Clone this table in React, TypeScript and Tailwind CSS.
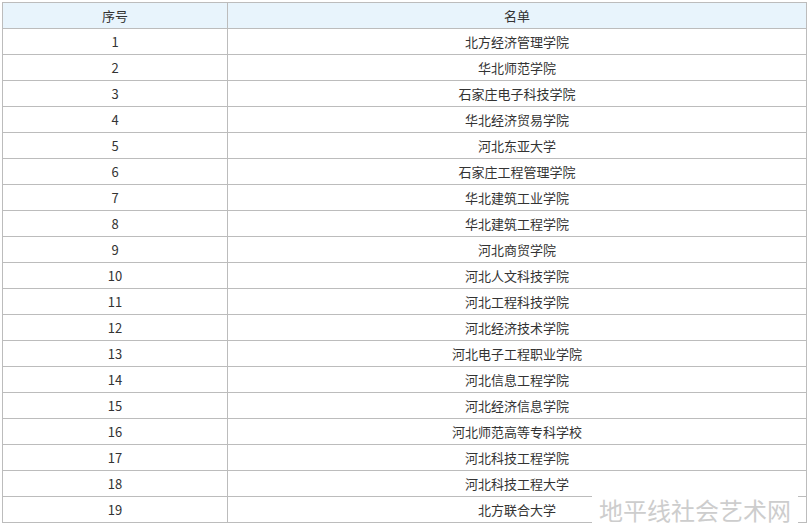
import React from "react";

const names = [
  "北方经济管理学院",
  "华北师范学院",
  "石家庄电子科技学院",
  "华北经济贸易学院",
  "河北东亚大学",
  "石家庄工程管理学院",
  "华北建筑工业学院",
  "华北建筑工程学院",
  "河北商贸学院",
  "河北人文科技学院",
  "河北工程科技学院",
  "河北经济技术学院",
  "河北电子工程职业学院",
  "河北信息工程学院",
  "河北经济信息学院",
  "河北师范高等专科学校",
  "河北科技工程学院",
  "河北科技工程大学",
  "北方联合大学",
];

export default function App() {
  return (
    <div
      className="relative w-[809px] h-[525px] bg-white overflow-hidden"
      style={{ fontFamily: '"Microsoft YaHei", "Noto Sans CJK SC", "Noto Sans", sans-serif' }}
    >
      <div className="ml-[2px] mt-[2px] w-[805px] border border-[#bcbcbc] text-[13px] text-[#333]">
        <div className="flex h-[26px] border-b border-[#bcbcbc] bg-[#e8f4fc]">
          <div className="w-[225px] border-r border-[#bcbcbc] flex items-center justify-center">序号</div>
          <div className="flex-1 flex items-center justify-center">名单</div>
        </div>
        {names.map((n, i) => (
          <div
            key={i}
            className={
              i === names.length - 1
                ? "flex h-[25px]"
                : "flex h-[26px] border-b border-[#bcbcbc]"
            }
          >
            <div className="w-[225px] border-r border-[#bcbcbc] flex items-center justify-center">{i + 1}</div>
            <div className="flex-1 flex items-center justify-center">{n}</div>
          </div>
        ))}
      </div>
      <div className="absolute left-[592px] top-[496px] w-[206px] h-[28px] bg-white flex items-center justify-center text-[24px] leading-[28px] text-[#cdcdcd] font-normal whitespace-nowrap">
        地平线社会艺术网
      </div>
    </div>
  );
}
